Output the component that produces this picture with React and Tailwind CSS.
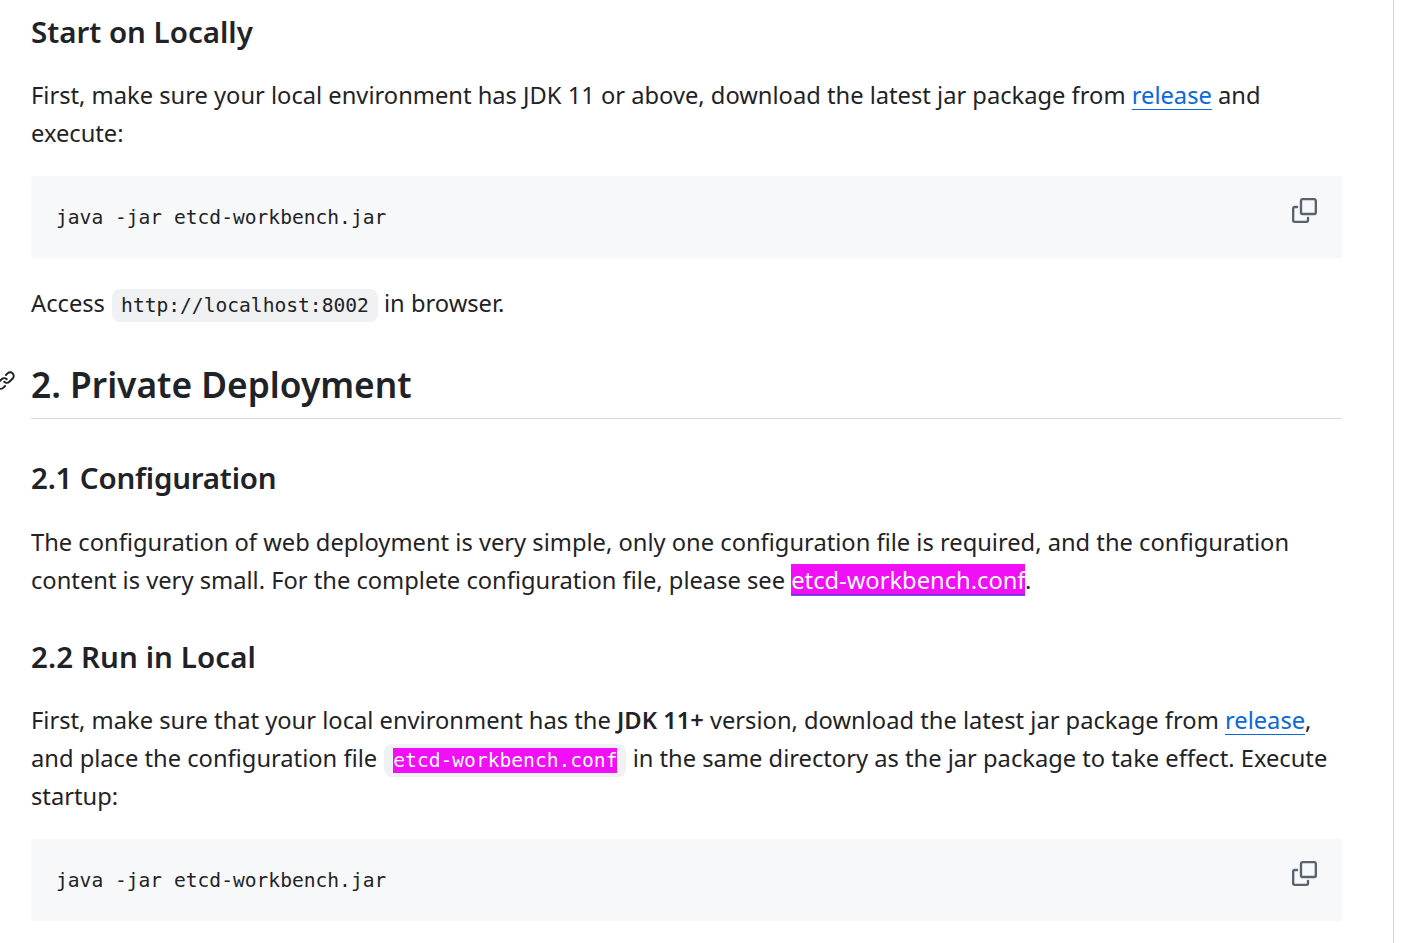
const SANS = "font-['Noto_Sans',sans-serif]"
const MONO = "font-['DejaVu_Sans_Mono',monospace] text-[19.6px]"

function CopyIcon() {
  return (
    <svg viewBox="0 0 16 16" fill="#59636e" className="absolute left-[1261px] top-[22px] h-[25px] w-[25px]">
      <path d="M0 6.75C0 5.784.784 5 1.75 5h1.5a.75.75 0 0 1 0 1.5h-1.5a.25.25 0 0 0-.25.25v7.5c0 .138.112.25.25.25h7.5a.25.25 0 0 0 .25-.25v-1.5a.75.75 0 0 1 1.5 0v1.5A1.75 1.75 0 0 1 9.25 16h-7.5A1.75 1.75 0 0 1 0 14.25Z" />
      <path d="M5 1.75C5 .784 5.784 0 6.75 0h7.5C15.216 0 16 .784 16 1.75v7.5A1.75 1.75 0 0 1 14.25 11h-7.5A1.75 1.75 0 0 1 5 9.25Zm1.75-.25a.25.25 0 0 0-.25.25v7.5c0 .138.112.25.25.25h7.5a.25.25 0 0 0 .25-.25v-7.5a.25.25 0 0 0-.25-.25Z" />
    </svg>
  )
}

function CodeBlock({ children }) {
  return (
    <div className="relative flex h-[82px] items-center rounded-[2px] bg-[#f6f8fa] pl-[25px] pt-[2px]">
      <code className={`${MONO} leading-[28px] text-[#1f2328]`}>{children}</code>
      <CopyIcon />
    </div>
  )
}

function InlineCode({ children }) {
  return <code className={`ml-[1px] rounded-[8px] bg-[#eff1f3] px-[9px] py-[5px] leading-[20px] ${MONO}`}>{children}</code>
}

function Link({ children }) {
  return <a className="text-[#0969da] underline underline-offset-[5px] decoration-1">{children}</a>
}

function H3({ className, children }) {
  return <h3 className={`text-[29.5px] font-semibold leading-[38px] ${className}`}>{children}</h3>
}

export default function App() {
  return (
    <div className={`h-[943px] overflow-hidden bg-white ${SANS} text-[#1f2328]`}>
      <div className="h-full w-[1394px] border-r border-[#d1d9e0] pl-[31px] pr-[51px] pt-[13px]">
        <H3>Start on Locally</H3>
        <p className="mt-[25px] text-[23.7px] leading-[38px]">
          First, make sure your local environment has JDK 11 or above, download the latest jar package from <Link>release</Link> and
          <br />
          execute:
        </p>
        <div className="mt-[24px]">
          <CodeBlock>java -jar etcd-workbench.jar</CodeBlock>
        </div>
        <p className="mt-[26px] h-[38px] text-[23.7px] leading-[38px]">
          Access <InlineCode>http://localhost:8002</InlineCode> in browser.
        </p>

        <div className="relative mt-[38px] border-b border-[#d1d9e0] pb-[10px]">
          <svg viewBox="0 0 16 16" fill="#1f2328" className="absolute left-[-36px] top-[10px] h-[21px] w-[21px]">
            <path d="m7.775 3.275 1.25-1.25a3.5 3.5 0 1 1 4.95 4.95l-2.5 2.5a3.5 3.5 0 0 1-4.95 0 .751.751 0 0 1 .018-1.042.751.751 0 0 1 1.042-.018 1.998 1.998 0 0 0 2.83 0l2.5-2.5a2.002 2.002 0 0 0-2.83-2.83l-1.25 1.25a.751.751 0 0 1-1.042-.018.751.751 0 0 1-.018-1.042Zm-4.69 9.64a1.998 1.998 0 0 0 2.83 0l1.25-1.25a.751.751 0 0 1 1.042.018.751.751 0 0 1 .018 1.042l-1.25 1.25a3.5 3.5 0 1 1-4.95-4.95l2.5-2.5a3.5 3.5 0 0 1 4.95 0 .751.751 0 0 1-.018 1.042.751.751 0 0 1-1.042.018 1.998 1.998 0 0 0-2.83 0l-2.5 2.5a1.998 1.998 0 0 0 0 2.83Z" />
          </svg>
          <h2 className="text-[35.3px] font-semibold leading-[48px]">2. Private Deployment</h2>
        </div>

        <H3 className="mt-[40px] tracking-[-0.2px]">2.1 Configuration</H3>
        <p className="mt-[26px] text-[23.7px] leading-[38px]">
          The configuration of web deployment is very simple, only one configuration file is required, and the configuration
          <br />
          content is very small. For the complete configuration file, please see{' '}
          <a className="bg-[#f10ff5] text-white underline underline-offset-[5px] decoration-1 decoration-[#0969da]">etcd-workbench.conf</a>.
        </p>

        <H3 className="mt-[39px] tracking-[0.1px]">2.2 Run in Local</H3>
        <p className="mt-[25px] text-[23.7px] leading-[38px]">
          First, make sure that your local environment has the <strong className="font-semibold">JDK 11+</strong> version, download the latest jar package from <Link>release</Link>,
          <br />
          and place the configuration file{' '}
          <InlineCode>
            <span className="bg-[#f10ff5] py-[1px] text-white">etcd-workbench.conf</span>
          </InlineCode>{' '}
          in the same directory as the jar package to take effect. Execute
          <br />
          startup:
        </p>
        <div className="mt-[24px]">
          <CodeBlock>java -jar etcd-workbench.jar</CodeBlock>
        </div>
      </div>
    </div>
  )
}
